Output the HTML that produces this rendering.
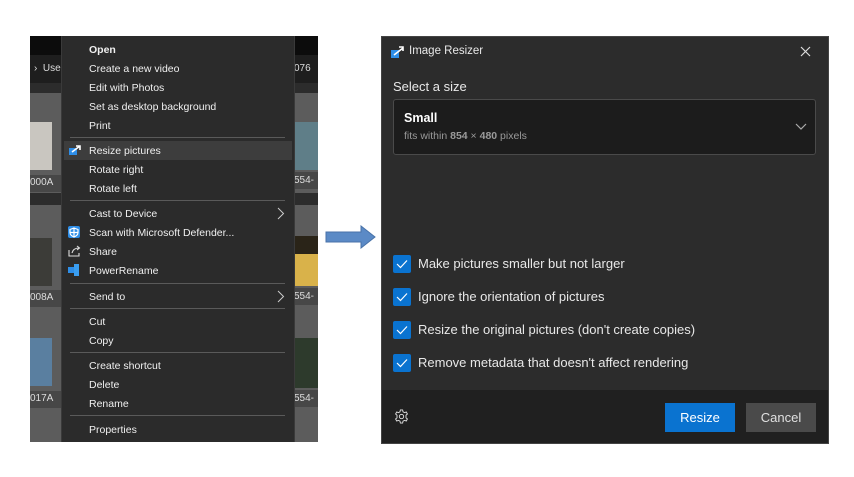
<!DOCTYPE html>
<html><head><style>
body{margin:0;width:854px;height:477px;background:#fff;position:relative;overflow:hidden;font-family:"Segoe UI","Liberation Sans",sans-serif}
.a{position:absolute}
.lbl{position:absolute;color:#ddd;font-size:10px}
.mi{position:absolute;left:89px;color:#f0f0f0;font-size:10.5px;line-height:12px}
.sep{position:absolute;left:70px;width:215px;height:1px;background:#5a5a5a}
.cb{position:absolute;left:393px;width:18px;height:18px;background:#0a73d0;border-radius:2px}
.cb svg{position:absolute;left:3px;top:4px}
.ct{position:absolute;left:418px;color:#e8e8e8;font-size:13px;line-height:16px}
</style></head><body>
<div class="a" style="left:30px;top:36px;width:288px;height:406px;background:#5c5c5c"></div>
<div class="a" style="left:30px;top:36px;width:288px;height:19px;background:#0c0c0c"></div>
<div class="a" style="left:30px;top:55px;width:288px;height:28px;background:#1e1e1e"></div>
<div class="a" style="left:30px;top:83px;width:288px;height:10px;background:#2c2c2c"></div>
<div class="lbl" style="left:34px;top:63px">›&nbsp; Use</div>
<div class="lbl" style="left:294px;top:63px">076</div>
<div class="a" style="left:30px;top:122px;width:22px;height:48px;background:#c9c6c0"></div>
<div class="a" style="left:30px;top:175px;width:31px;height:17px;background:#474747"></div>
<div class="lbl" style="left:30px;top:177px">000A</div>
<div class="a" style="left:30px;top:193px;width:288px;height:12px;background:#2c2c2c"></div>
<div class="a" style="left:30px;top:238px;width:22px;height:48px;background:#3c3c38"></div>
<div class="a" style="left:30px;top:290px;width:31px;height:17px;background:#474747"></div>
<div class="lbl" style="left:30px;top:292px">008A</div>
<div class="a" style="left:30px;top:338px;width:22px;height:48px;background:#5a7fa0"></div>
<div class="a" style="left:30px;top:391px;width:31px;height:17px;background:#474747"></div>
<div class="lbl" style="left:30px;top:393px">017A</div>
<div class="a" style="left:294px;top:122px;width:24px;height:48px;background:#5f7e88"></div>
<div class="a" style="left:294px;top:172px;width:24px;height:17px;background:#474747"></div>
<div class="lbl" style="left:294px;top:175px">554-</div>
<div class="a" style="left:294px;top:236px;width:24px;height:50px;background:#d9b24a"></div>
<div class="a" style="left:294px;top:236px;width:24px;height:18px;background:#2a2418"></div>
<div class="a" style="left:294px;top:288px;width:24px;height:17px;background:#474747"></div>
<div class="lbl" style="left:294px;top:291px">554-</div>
<div class="a" style="left:294px;top:338px;width:24px;height:50px;background:#2d3a2c"></div>
<div class="a" style="left:294px;top:390px;width:24px;height:17px;background:#474747"></div>
<div class="lbl" style="left:294px;top:393px">554-</div>
<div class="a" style="left:61px;top:36px;width:232px;height:406px;background:#2b2b2b;border-left:1px solid #3a3a3a;border-right:1px solid #3a3a3a"></div>
<div class="a" style="left:64px;top:141px;width:228px;height:19px;background:#3d3d3d"></div>
<div class="mi" style="top:44px;font-weight:bold">Open</div>
<div class="mi" style="top:63px">Create a new video</div>
<div class="mi" style="top:82px">Edit with Photos</div>
<div class="mi" style="top:101px">Set as desktop background</div>
<div class="mi" style="top:120px">Print</div>
<div class="sep" style="top:137px"></div>
<svg class="a" style="left:69px;top:145px" width="12" height="10"><rect x="0" y="3" width="8" height="7" fill="#2e8ee8"/><path d="M3 7 L11 1 M7 1 H11 V5" stroke="#fff" stroke-width="1.6" fill="none"/></svg>
<div class="mi" style="top:145px">Resize pictures</div>
<div class="mi" style="top:164px">Rotate right</div>
<div class="mi" style="top:183px">Rotate left</div>
<div class="sep" style="top:200px"></div>
<div class="mi" style="top:208px">Cast to Device</div>
<svg class="a" style="left:277px;top:207px" width="8" height="13"><path d="M1 1 L6.5 6.5 L1 12" stroke="#ccc" stroke-width="1" fill="none"/></svg>
<svg class="a" style="left:68px;top:226px" width="12" height="12"><rect width="12" height="12" rx="2" fill="#2e8ee8"/><path d="M6 2 L10 3.5 V6.5 C10 9 8 10 6 11 C4 10 2 9 2 6.5 V3.5Z M6 2V11 M2 6.5H10" stroke="#fff" stroke-width="1.2" fill="none"/></svg>
<div class="mi" style="top:227px">Scan with Microsoft Defender...</div>
<svg class="a" style="left:68px;top:245px" width="13" height="12"><path d="M1 5 V11 H11 V8 M4 8 C5 4 8 3 11 3 M9 1 L11.5 3 L9 5" stroke="#ddd" stroke-width="1.1" fill="none"/></svg>
<div class="mi" style="top:246px">Share</div>
<svg class="a" style="left:68px;top:264px" width="12" height="12"><rect x="0" y="3" width="6" height="6" fill="#2e8ee8"/><rect x="6" y="0" width="5" height="12" fill="#3a9ef0"/></svg>
<div class="mi" style="top:265px">PowerRename</div>
<div class="sep" style="top:283px"></div>
<div class="mi" style="top:291px">Send to</div>
<svg class="a" style="left:277px;top:290px" width="8" height="13"><path d="M1 1 L6.5 6.5 L1 12" stroke="#ccc" stroke-width="1" fill="none"/></svg>
<div class="sep" style="top:308px"></div>
<div class="mi" style="top:316px">Cut</div>
<div class="mi" style="top:335px">Copy</div>
<div class="sep" style="top:352px"></div>
<div class="mi" style="top:360px">Create shortcut</div>
<div class="mi" style="top:379px">Delete</div>
<div class="mi" style="top:398px">Rename</div>
<div class="sep" style="top:415px"></div>
<div class="mi" style="top:424px">Properties</div>
<svg class="a" style="left:325px;top:225px" width="52" height="24"><path d="M1 7 H36 V1 L50 12 L36 23 V17 H1Z" fill="#5b8ac6" stroke="#4872a8" stroke-width="1"/></svg>
<div class="a" style="left:381px;top:36px;width:448px;height:408px;background:#2c2c2c;border:1px solid #444;box-sizing:border-box"></div>
<div class="a" style="left:382px;top:390px;width:446px;height:53px;background:#202020"></div>
<svg class="a" style="left:391px;top:46px" width="13" height="12"><rect x="0" y="4" width="8" height="8" fill="#2e8ee8"/><path d="M3 9 L12 2 M8 1 H12 V5" stroke="#fff" stroke-width="1.6" fill="none"/></svg>
<div class="a" style="left:409px;top:45px;color:#e8e8e8;font-size:11.5px">Image Resizer</div>
<svg class="a" style="left:800px;top:46px" width="11" height="11"><path d="M1 1 L10 10 M10 1 L1 10" stroke="#ddd" stroke-width="1.2"/></svg>
<div class="a" style="left:393px;top:79px;color:#e8e8e8;font-size:13px">Select a size</div>
<div class="a" style="left:393px;top:99px;width:423px;height:56px;background:#1c1c1c;border:1px solid #4a4a4a;border-radius:3px;box-sizing:border-box"></div>
<div class="a" style="left:404px;top:111px;color:#fff;font-size:12.5px;font-weight:bold">Small</div>
<div class="a" style="left:404px;top:130px;color:#9a9a9a;font-size:10.5px">fits within <b>854</b> × <b>480</b> pixels</div>
<svg class="a" style="left:795px;top:123px" width="12" height="8"><path d="M1 1 L6 6 L11 1" stroke="#aaa" stroke-width="1.2" fill="none"/></svg>
<div class="cb" style="top:255px"><svg width="12" height="10"><path d="M1 5 L4.5 8.5 L11 1.5" stroke="#fff" stroke-width="1.2" fill="none"/></svg></div>
<div class="ct" style="top:256px">Make pictures smaller but not larger</div>
<div class="cb" style="top:288px"><svg width="12" height="10"><path d="M1 5 L4.5 8.5 L11 1.5" stroke="#fff" stroke-width="1.2" fill="none"/></svg></div>
<div class="ct" style="top:289px">Ignore the orientation of pictures</div>
<div class="cb" style="top:321px"><svg width="12" height="10"><path d="M1 5 L4.5 8.5 L11 1.5" stroke="#fff" stroke-width="1.2" fill="none"/></svg></div>
<div class="ct" style="top:322px">Resize the original pictures (don't create copies)</div>
<div class="cb" style="top:354px"><svg width="12" height="10"><path d="M1 5 L4.5 8.5 L11 1.5" stroke="#fff" stroke-width="1.2" fill="none"/></svg></div>
<div class="ct" style="top:355px">Remove metadata that doesn't affect rendering</div>
<svg class="a" style="left:394px;top:409px" width="15" height="15" viewBox="0 0 16 16"><path d="M6.8 1 H9.2 L9.6 3 L11.2 3.9 L13.1 3.2 L14.3 5.3 L12.8 6.6 V9.4 L14.3 10.7 L13.1 12.8 L11.2 12.1 L9.6 13 L9.2 15 H6.8 L6.4 13 L4.8 12.1 L2.9 12.8 L1.7 10.7 L3.2 9.4 V6.6 L1.7 5.3 L2.9 3.2 L4.8 3.9 L6.4 3Z" stroke="#ddd" stroke-width="1" fill="none"/><circle cx="8" cy="8" r="2.3" stroke="#ddd" stroke-width="1" fill="none"/></svg>
<div class="a" style="left:665px;top:403px;width:70px;height:29px;background:#0a73d0;color:#fff;font-size:13px;line-height:29px;text-align:center">Resize</div>
<div class="a" style="left:746px;top:403px;width:70px;height:29px;background:#4a4a4a;color:#e0e0e0;font-size:13px;line-height:29px;text-align:center">Cancel</div>
</body></html>
